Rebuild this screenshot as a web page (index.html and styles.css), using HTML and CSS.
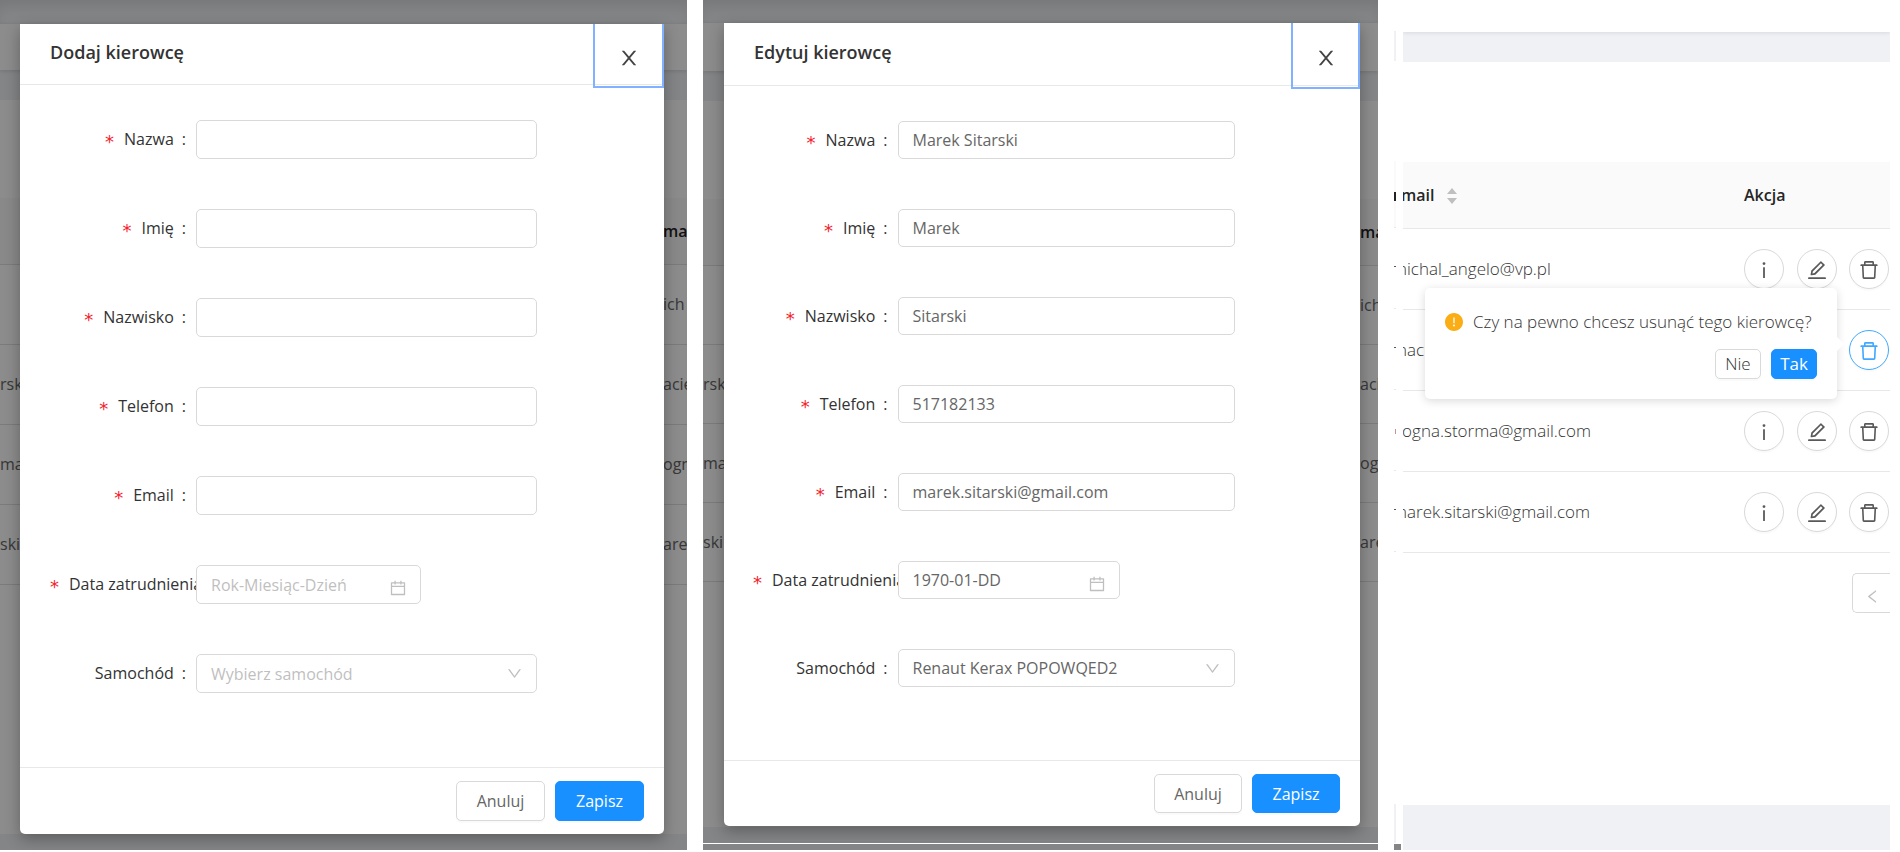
FILE: index.html
```html
<!DOCTYPE html>
<html lang="pl">
<head>
<meta charset="utf-8">
<title>Kierowcy</title>
<link rel="stylesheet" href="styles.css">
</head>
<body>
<svg class="sprite" aria-hidden="true">
  <symbol id="i-close" viewBox="64 64 896 896"><path d="M563.8 512l262.5-312.9c4.4-5.2.7-13.1-6.1-13.1h-79.8c-4.7 0-9.2 2.1-12.3 5.7L511.6 449.8 295.1 191.7c-3-3.6-7.5-5.7-12.3-5.7H203c-6.8 0-10.5 7.9-6.1 13.1L459.4 512 196.9 824.9A7.95 7.95 0 0 0 203 838h79.8c4.7 0 9.2-2.1 12.3-5.7l216.5-258.1 216.5 258.1c3 3.6 7.5 5.7 12.3 5.7h79.8c6.8 0 10.5-7.9 6.1-13.1L563.8 512z"/></symbol>
  <symbol id="i-calendar" viewBox="64 64 896 896"><path d="M880 184H712v-64c0-4.400-3.600-8-8-8h-56c-4.400 0-8 3.600-8 8v64H384v-64c0-4.400-3.600-8-8-8h-56c-4.400 0-8 3.600-8 8v64H144c-17.700 0-32 14.300-32 32v664c0 17.700 14.300 32 32 32h736c17.700 0 32-14.300 32-32V216c0-17.700-14.300-32-32-32zm-40 656H184V460h656v380zM184 392V256h128v48c0 4.400 3.600 8 8 8h56c4.400 0 8-3.600 8-8v-48h256v48c0 4.400 3.600 8 8 8h56c4.400 0 8-3.600 8-8v-48h128v136H184z"/></symbol>
  <symbol id="i-down" viewBox="64 64 896 896"><path d="M884 256h-75c-5.100 0-9.900 2.500-12.900 6.600L512 654.200 227.900 262.600c-3-4.100-7.800-6.600-12.900-6.600h-75c-6.500 0-10.300 7.400-6.500 12.700l352.600 486.100c12.800 17.600 39 17.600 51.700 0l352.600-486.100c3.900-5.300.1-12.700-6.400-12.700z"/></symbol>
  <symbol id="i-left" viewBox="64 64 896 896"><path d="M724 218.300V141c0-6.700-7.700-10.400-12.900-6.300L260.300 486.800a31.860 31.860 0 0 0 0 50.300l450.800 352.100c5.300 4.100 12.900.4 12.900-6.300v-77.300c0-4.900-2.300-9.600-6.100-12.600l-360-281 360-281.100c3.800-3 6.100-7.700 6.100-12.600z"/></symbol>
  <symbol id="i-info" viewBox="64 64 896 896"><path d="M448 224a64 64 0 1 0 128 0 64 64 0 1 0-128 0zm96 168h-64c-4.400 0-8 3.600-8 8v464c0 4.400 3.600 8 8 8h64c4.400 0 8-3.600 8-8V400c0-4.400-3.600-8-8-8z"/></symbol>
  <symbol id="i-edit" viewBox="64 64 896 896"><path d="M257.700 752c2 0 4-.2 6-.5L431.900 722c2-.4 3.900-1.300 5.300-2.800l423.900-423.900a9.960 9.960 0 0 0 0-14.100L694.900 114.900c-1.900-1.900-4.400-2.900-7.100-2.900s-5.200 1-7.100 2.900L256.800 538.800c-1.500 1.500-2.400 3.300-2.800 5.300l-29.500 168.200a33.500 33.500 0 0 0 9.400 29.800c6.600 6.400 14.900 9.900 23.800 9.900zm67.400-174.400L687.800 215l73.300 73.300-362.700 362.600-88.900 15.700 15.600-89zM880 836H144c-17.700 0-32 14.300-32 32v36c0 4.400 3.600 8 8 8h784c4.400 0 8-3.600 8-8v-36c0-17.700-14.300-32-32-32z"/></symbol>
  <symbol id="i-delete" viewBox="64 64 896 896"><path d="M360 184h-8c4.400 0 8-3.600 8-8v8h304v-8c0 4.400 3.600 8 8 8h-8v72h72v-80c0-35.300-28.700-64-64-64H352c-35.300 0-64 28.700-64 64v80h72v-72zm504 72H160c-17.700 0-32 14.300-32 32v32c0 4.400 3.600 8 8 8h60.400l24.700 523c1.600 34.100 29.800 61 63.900 61h454c34.200 0 62.300-26.800 63.900-61l24.700-523H888c4.400 0 8-3.600 8-8v-32c0-17.700-14.300-32-32-32zM731.300 840H292.700l-24.200-512h487l-24.200 512z"/></symbol>
  <symbol id="i-warn" viewBox="64 64 896 896"><path d="M512 64C264.600 64 64 264.600 64 512s200.600 448 448 448 448-200.600 448-448S759.400 64 512 64zm-32 232c0-4.400 3.600-8 8-8h48c4.400 0 8 3.600 8 8v272c0 4.400-3.600 8-8 8h-48c-4.400 0-8-3.600-8-8V296zm32 440a48.010 48.010 0 0 1 0-96 48.010 48.010 0 0 1 0 96z"/></symbol>
  <symbol id="i-sort" viewBox="0 0 10 16"><path d="M5 0l5 6H0zM5 16l5-6H0z"/></symbol>
</svg>

<main class="board">
  <section class="panel panel-add">
    <div class="backdrop">
      <div class="bar"></div>
      <div class="toolbar"></div>
      <div class="band"></div>
      <div class="sheet">
        <table class="peek">
          <tr><th></th><th>mai</th></tr>
          <tr><td></td><td>ich</td></tr>
          <tr><td>rski</td><td>acie</td></tr>
          <tr><td>ma</td><td>ogn</td></tr>
          <tr><td>ski</td><td>are</td></tr>
        </table>
      </div>
      <div class="foot"></div>
    </div>
    <div class="mask"></div>
    <form class="modal" role="dialog" aria-labelledby="t1">
      <header class="modal-head">
        <h2 id="t1">Dodaj kierowcę</h2>
        <button type="button" class="close" aria-label="Zamknij"><svg><use href="#i-close"/></svg></button>
      </header>
      <div class="modal-body">
        <div class="row"><label for="a1"><i>*</i>Nazwa<b>:</b></label><div class="field"><input id="a1" type="text"></div></div>
        <div class="row"><label for="a2"><i>*</i>Imię<b>:</b></label><div class="field"><input id="a2" type="text"></div></div>
        <div class="row"><label for="a3"><i>*</i>Nazwisko<b>:</b></label><div class="field"><input id="a3" type="text"></div></div>
        <div class="row"><label for="a4"><i>*</i>Telefon<b>:</b></label><div class="field"><input id="a4" type="text"></div></div>
        <div class="row"><label for="a5"><i>*</i>Email<b>:</b></label><div class="field"><input id="a5" type="text"></div></div>
        <div class="row"><label for="a6"><i>*</i>Data zatrudnienia</label><div class="field date"><input id="a6" type="text" placeholder="Rok-Miesiąc-Dzień"><svg class="cal"><use href="#i-calendar"/></svg></div></div>
        <div class="row"><label for="a7">Samochód<b>:</b></label><div class="field"><select id="a7" class="empty"><option>Wybierz samochód</option></select><svg class="down"><use href="#i-down"/></svg></div></div>
      </div>
      <footer class="modal-foot">
        <button type="button" class="btn">Anuluj</button>
        <button type="button" class="btn primary">Zapisz</button>
      </footer>
    </form>
  </section>

  <div class="column">
    <section class="panel panel-edit">
      <div class="backdrop">
        <div class="bar"></div>
        <div class="toolbar"></div>
        <div class="band"></div>
        <div class="sheet">
          <table class="peek">
            <tr><th></th><th>ma</th></tr>
            <tr><td></td><td>ich</td></tr>
            <tr><td>rski</td><td>aci</td></tr>
            <tr><td>ma</td><td>og</td></tr>
            <tr><td>ski</td><td>are</td></tr>
          </table>
        </div>
        <div class="foot"></div>
      </div>
      <div class="mask"></div>
      <form class="modal" role="dialog" aria-labelledby="t2">
        <header class="modal-head">
          <h2 id="t2">Edytuj kierowcę</h2>
          <button type="button" class="close" aria-label="Zamknij"><svg><use href="#i-close"/></svg></button>
        </header>
        <div class="modal-body">
          <div class="row"><label for="b1"><i>*</i>Nazwa<b>:</b></label><div class="field"><input id="b1" type="text" value="Marek Sitarski"></div></div>
          <div class="row"><label for="b2"><i>*</i>Imię<b>:</b></label><div class="field"><input id="b2" type="text" value="Marek"></div></div>
          <div class="row"><label for="b3"><i>*</i>Nazwisko<b>:</b></label><div class="field"><input id="b3" type="text" value="Sitarski"></div></div>
          <div class="row"><label for="b4"><i>*</i>Telefon<b>:</b></label><div class="field"><input id="b4" type="text" value="517182133"></div></div>
          <div class="row"><label for="b5"><i>*</i>Email<b>:</b></label><div class="field"><input id="b5" type="text" value="marek.sitarski@gmail.com"></div></div>
          <div class="row"><label for="b6"><i>*</i>Data zatrudnienia</label><div class="field date"><input id="b6" type="text" value="1970-01-DD"><svg class="cal"><use href="#i-calendar"/></svg></div></div>
          <div class="row"><label for="b7">Samochód<b>:</b></label><div class="field"><select id="b7"><option>Renaut Kerax POPOWQED2</option></select><svg class="down"><use href="#i-down"/></svg></div></div>
        </div>
        <footer class="modal-foot">
          <button type="button" class="btn">Anuluj</button>
          <button type="button" class="btn primary">Zapisz</button>
        </footer>
      </form>
    </section>
    <div class="edge"></div>
  </div>

  <section class="list">
    <div class="sliver"><div class="sliver-page"></div><div class="sliver-end"></div></div>
    <div class="page">
      <div class="page-top"></div>
      <div class="page-band"></div>
      <div class="card">
        <table class="drivers">
          <thead>
            <tr><th><span class="mail">Email</span><svg class="sort"><use href="#i-sort"/></svg></th><th class="act">Akcja</th></tr>
          </thead>
          <tbody>
            <tr><td><span class="mail">michal_angelo@vp.pl</span></td><td class="act"><div class="acts">
              <button class="round" aria-label="Info"><svg><use href="#i-info"/></svg></button><button class="round" aria-label="Edytuj"><svg><use href="#i-edit"/></svg></button><button class="round" aria-label="Usuń"><svg><use href="#i-delete"/></svg></button></div></td></tr>
            <tr><td><span class="mail">maci</span></td><td class="act"><div class="acts acts-end">
              <div class="anchor">
                <button class="round active" aria-label="Usuń"><svg><use href="#i-delete"/></svg></button>
                <div class="pop" role="dialog">
                  <p><svg><use href="#i-warn"/></svg>Czy na pewno chcesz usunąć tego kierowcę?</p>
                  <div class="pop-foot"><button class="btn small">Nie</button><button class="btn small primary">Tak</button></div>
                </div>
              </div></div></td></tr>
            <tr><td><span class="mail">bogna.storma@gmail.com</span></td><td class="act"><div class="acts">
              <button class="round" aria-label="Info"><svg><use href="#i-info"/></svg></button><button class="round" aria-label="Edytuj"><svg><use href="#i-edit"/></svg></button><button class="round" aria-label="Usuń"><svg><use href="#i-delete"/></svg></button></div></td></tr>
            <tr><td><span class="mail">marek.sitarski@gmail.com</span></td><td class="act"><div class="acts">
              <button class="round" aria-label="Info"><svg><use href="#i-info"/></svg></button><button class="round" aria-label="Edytuj"><svg><use href="#i-edit"/></svg></button><button class="round" aria-label="Usuń"><svg><use href="#i-delete"/></svg></button></div></td></tr>
          </tbody>
        </table>
        <div class="pager"><button aria-label="Poprzednia strona"><svg><use href="#i-left"/></svg></button></div>
      </div>
      <div class="page-foot"></div>
    </div>
  </section>
</main>
</body>
</html>
```
FILE: styles.css
```css
* { box-sizing: border-box; }
body {
  margin: 0;
  background: #fff;
  color: #666;
  font-family: "Open Sans", "Noto Sans", sans-serif;
  font-size: 16px;
  line-height: 24px;
}
button, input, select { font: inherit; color: inherit; margin: 0; }
svg { fill: currentColor; display: block; }
.sprite { position: absolute; width: 0; height: 0; }

.board {
  display: grid;
  grid-template-columns: 687fr 675fr 496fr;
  gap: 16px;
  padding-right: 10px;
}
.column { display: flex; flex-direction: column; }
.edge { height: 6px; margin-top: 1px; background: #848587; }

/* dimmed page with a dialog over it; both share one grid cell */
.panel {
  --top: 24px;
  --tool: 46px;
  --head: 60px;
  --field: 39px;
  --line: 80px;
  --close: 71px;
  --btn: 89px;
  display: grid;
  overflow: hidden;
}
.panel-edit {
  --top: 23px;
  --tool: 48px;
  --head: 62px;
  --field: 38px;
  --line: 79px;
  --close: 69px;
  --btn: 88px;
}
.backdrop, .mask, .modal { grid-area: 1 / 1; min-width: 0; }
.backdrop { display: flex; flex-direction: column; background: #f0f2f5; }
.bar { height: var(--top); box-shadow: inset 0 10px 16px -6px rgba(0, 0, 0, .12); }
.toolbar { height: var(--tool); background: #fff; box-shadow: 0 1px 4px rgba(0, 21, 41, .15); }
.band { height: 30px; }
.sheet { flex: 1; padding-top: 98px; background: #fff; }
.foot { height: 16px; }
.mask { background: rgba(0, 0, 0, .45); }
.peek { width: 100%; border-collapse: collapse; table-layout: fixed; }
.peek tr { height: var(--line); border-bottom: 1px solid #e0e0e0; }
.peek tr:first-child { height: 66px; background: #fafafa; color: #1f1f1f; }
.peek th { font-weight: 600; }
.peek th, .peek td { padding: 0; white-space: nowrap; }
.peek :first-child { text-align: left; }
.peek tr > :last-child { width: 24px; text-align: left; }
.panel-edit .peek tr > :last-child { width: 18px; }

.modal {
  display: flex;
  flex-direction: column;
  margin: var(--top) 23px 16px 20px;
  background: #fff;
  border-radius: 0 0 5px 5px;
  box-shadow: 0 5px 15px rgba(0, 0, 0, .3);
}
.panel-edit .modal { margin: var(--top) 18px 17px 21px; }
.modal-head {
  position: relative;
  display: flex;
  align-items: center;
  height: calc(var(--head) + 1px);
  padding: 0 30px 4px;
  border-bottom: 1px solid #e8e8e8;
}
.modal-head h2 { margin: 0; color: #333; font-size: 18px; font-weight: 600; line-height: 28px; }
.close {
  position: absolute;
  top: 0;
  right: 0;
  width: var(--close);
  height: calc(var(--head) + 4px);
  padding: 6px 0 0;
  display: grid;
  place-items: center;
  border: 2px solid #82b1ff;
  border-top: 0;
  background: none;
  color: #434343;
}
.close svg { width: 20px; height: 20px; }
.modal-body { padding: 35px 30px 24px; }
.panel-edit .modal-body { padding: 35px 29px 23px; }
.row { display: grid; grid-template-columns: 25% 58.333%; margin-bottom: 50px; }
.row label {
  height: var(--field);
  overflow: hidden;
  padding-right: 10px;
  color: #333;
  line-height: var(--field);
  text-align: right;
  white-space: nowrap;
}
.row:nth-child(6) label { padding-right: 0; text-align: left; }
.row label i {
  margin-right: 10px;
  color: #f5222d;
  font-family: "DejaVu Sans", sans-serif;
  font-size: 18px;
  font-style: normal;
  line-height: 16px;
  vertical-align: -3px;
}
.row label b { margin-left: 8px; font-weight: 400; }
.field { position: relative; }
.date { width: 66%; }
.field input, .field select {
  display: block;
  width: 100%;
  height: var(--field);
  padding: 0 14px;
  appearance: none;
  border: 1px solid #d9d9d9;
  border-radius: 5px;
  background: #fff;
}
.field input::placeholder, .field .empty { color: #bfbfbf; opacity: 1; }
.field svg { position: absolute; color: #bfbfbf; }
.cal { right: 15px; top: 15px; width: 16px; height: 16px; }
.down { right: 15px; top: 12px; width: 15px; height: 15px; }
.modal-foot {
  display: flex;
  justify-content: flex-end;
  gap: 10px;
  padding: 13px 20px;
  border-top: 1px solid #e8e8e8;
}
.btn {
  width: var(--btn);
  height: calc(var(--field) + 1px);
  padding: 0;
  border: 1px solid #d9d9d9;
  border-radius: 5px;
  background: #fff;
  box-shadow: 0 2px 0 rgba(0, 0, 0, .02);
}
.btn.primary { border-color: #1890ff; background: #1890ff; color: #fff; }

/* driver list */
.list { display: flex; gap: 7px; min-width: 0; }
.sliver { width: 2px; display: flex; flex-direction: column; }
.sliver-page {
  flex: 1;
  background:
    linear-gradient(#222, #222) 0 192px / 2px 9px,
    linear-gradient(#555, #555) 0 266px / 2px 1px,
    linear-gradient(#555, #555) 0 347px / 2px 1px,
    linear-gradient(#b99, #b99) 1px 429px / 1px 5px,
    linear-gradient(#555, #555) 0 509px / 2px 1px,
    linear-gradient(#e8e8e8, #e8e8e8) 0 227px / 2px 1px,
    linear-gradient(#e8e8e8, #e8e8e8) 0 308px / 2px 1px,
    linear-gradient(#e8e8e8, #e8e8e8) 0 389px / 2px 1px,
    linear-gradient(#e8e8e8, #e8e8e8) 0 470px / 2px 1px,
    linear-gradient(#e8e8e8, #e8e8e8) 0 551px / 2px 1px,
    linear-gradient(#fafafa, #fafafa) 0 161px / 2px 66px,
    linear-gradient(#f0f1f5, #f0f1f5) 0 31px / 2px 30px,
    linear-gradient(#f0f1f5, #f0f1f5) 0 100% / 2px 39px;
  background-repeat: no-repeat;
}
.sliver-end { width: 7px; height: 6px; margin-top: 1px; background: #848587; }
.page { flex: 1; min-width: 0; display: flex; flex-direction: column; overflow: hidden; background: #f0f1f5; }
.page-top { height: 32px; background: #fff; box-shadow: 0 1px 4px rgba(0, 21, 41, .1); }
.page-band { height: 30px; }
.card { flex: 1; padding-top: 100px; background: #fff; }
.page-foot { height: 45px; }
.drivers { width: 100%; border-collapse: collapse; table-layout: fixed; }
.drivers tr { height: 81px; border-bottom: 1px solid #e8e8e8; }
.drivers thead tr { height: 66px; background: #fafafa; color: #262626; }
.drivers th, .drivers td { padding: 0; text-align: left; white-space: nowrap; }
.drivers th { font-weight: 600; }
.drivers td { color: #333; font-size: 17px; font-weight: 300; }
.drivers .act { width: 146px; }
.mail { margin-left: -11px; }
.sort { display: inline-block; width: 10px; height: 16px; margin-left: 13px; color: #bfbfbf; vertical-align: -3px; }
.acts { display: flex; justify-content: space-between; padding-right: 1px; }
.acts-end { justify-content: flex-end; }
.anchor { position: relative; }
.round {
  display: grid;
  place-items: center;
  width: 40px;
  height: 40px;
  padding: 3px 0 0;
  border: 1px solid #d9d9d9;
  border-radius: 50%;
  background: #fff;
  color: #595959;
  box-shadow: 0 2px 0 rgba(0, 0, 0, .02);
}
.round svg { width: 20px; height: 20px; }
.round.active { border-color: #40a9ff; color: #40a9ff; }
.pop {
  position: absolute;
  top: -42px;
  right: 52px;
  z-index: 1;
  min-width: 412px;
  padding: 22px 20px 20px;
  border-radius: 5px;
  background: #fff;
  box-shadow: 0 2px 10px rgba(0, 0, 0, .15);
}
.pop::after {
  content: "";
  position: absolute;
  top: 51px;
  right: -5px;
  width: 10px;
  height: 10px;
  background: #fff;
  transform: rotate(45deg);
}
.pop p { display: flex; align-items: center; gap: 10px; margin: 0 0 15px; }
.pop p svg { width: 18px; height: 18px; color: #faad14; }
.pop-foot { display: flex; justify-content: flex-end; gap: 10px; }
.btn.small { width: 46px; height: 30px; }
.btn.small.primary { font-weight: 400; }
.pager { display: flex; justify-content: flex-end; padding-top: 20px; }
.pager button {
  display: grid;
  place-items: center;
  width: 38px;
  height: 40px;
  padding: 8px 0 0 2px;
  border: 1px solid #d9d9d9;
  border-right: 0;
  border-radius: 5px 0 0 5px;
  background: #fff;
  color: #bfbfbf;
}
.pager svg { width: 15px; height: 15px; }
```
